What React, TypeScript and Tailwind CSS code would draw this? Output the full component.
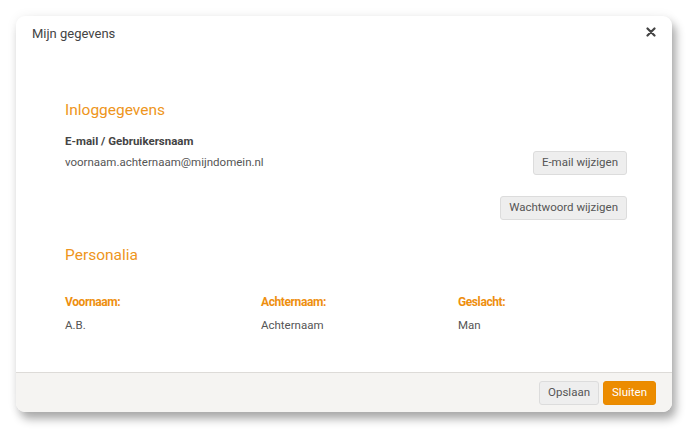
import React from "react";

const Field = ({ label, value }: { label: string; value: string }) => (
  <div className="flex flex-col gap-[7px]">
    <span className="text-[12px] leading-[16px] font-bold tracking-[-0.4px] text-[#ee8f0f]">{label}</span>
    <span className="text-[11.5px] leading-[16px] text-[#555]">{value}</span>
  </div>
);

const btn =
  "h-[24px] px-[8px] rounded-[3px] border border-[#dcdcdc] bg-[#eeeeee] text-[11.5px] text-[#555]";

export default function App() {
  return (
    <div
      className="w-[700px] h-[441px] bg-white pt-4 pl-4"
      style={{ fontFamily: "Roboto, 'Liberation Sans', sans-serif" }}
    >
      <div className="w-[656px] h-[396px] bg-white rounded-[9px] flex flex-col overflow-hidden shadow-[4px_7px_10px_rgba(0,0,0,0.32),0_0_12px_rgba(0,0,0,0.06)]">
        <div className="flex items-center justify-between pl-4 pr-[16px] h-[36px]">
          <span className="text-[13px] text-[#444]">Mijn gegevens</span>
          <button className="leading-none -mt-[4px]">
            <svg width="10" height="10" viewBox="0 0 10 10">
              <path d="M1.5 1.5L8.5 8.5M8.5 1.5L1.5 8.5" stroke="#444" strokeWidth="2.2" strokeLinecap="round" />
            </svg>
          </button>
        </div>
        <div className="flex-1 pl-[49px] pr-[45px] pt-[48px]">
          <h2 className="text-[15.5px] leading-[20px] text-[#ee9520]">Inloggegevens</h2>
          <div className="mt-[13px] text-[11.5px] leading-[16px] font-bold text-[#444]">E-mail / Gebruikersnaam</div>
          <div className="flex items-center justify-between mt-[2px]">
            <span className="text-[11.5px] text-[#555]">voornaam.achternaam@mijndomein.nl</span>
            <button className={btn}>E-mail wijzigen</button>
          </div>
          <div className="flex justify-end mt-[21px]">
            <button className={btn}>Wachtwoord wijzigen</button>
          </div>
          <h2 className="text-[15.5px] leading-[20px] text-[#ee9520] mt-[25px]">Personalia</h2>
          <div className="grid grid-cols-[196px_197px_196px] mt-[29px]">
            <Field label="Voornaam:" value="A.B." />
            <Field label="Achternaam:" value="Achternaam" />
            <Field label="Geslacht:" value="Man" />
          </div>
        </div>
        <div className="h-[40px] border-t border-[#dddbd8] bg-[#f5f4f2] flex items-center justify-end gap-1 pr-[16px]">
          <button className={btn}>Opslaan</button>
          <button className="h-[24px] px-[8px] rounded-[3px] border border-[#e88a00] bg-[#ec8c00] text-[11.5px] text-white">
            Sluiten
          </button>
        </div>
      </div>
    </div>
  );
}
